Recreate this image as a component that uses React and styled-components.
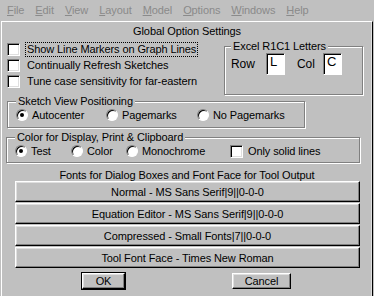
import React from "react";
import styled, { createGlobalStyle } from "styled-components";

const Global = createGlobalStyle`
  html, body {
    margin: 0;
    padding: 0;
    background: #c0c0c0;
  }
  body {
    width: 374px;
    height: 296px;
    overflow: hidden;
    font-family: "Liberation Sans", Arial, sans-serif;
    font-size: 11px;
    letter-spacing: -0.1px;
    color: #000;
  }
`;

const Screen = styled.div`
  width: 374px;
  height: 296px;
  background: #c0c0c0;
  display: flex;
  flex-direction: column;
`;

const MenuBar = styled.div`
  height: 21px;
  display: flex;
  align-items: center;
  padding-left: 1.5px;
`;

const MenuItem = styled.span`
  padding: 0 5.5px;
  color: #8a8a8a;
  line-height: 21px;
  u {
    text-decoration: underline;
    text-underline-offset: 1px;
  }
`;

const Dialog = styled.div`
  flex: 1;
  margin-left: 1px;
  width: 370px;
  border-top: 1px solid #fff;
  border-left: 1px solid #fff;
  border-right: 1px solid #000;
  box-shadow: inset -1px 0 0 #dfdfdf;
  display: flex;
  flex-direction: column;
`;

const Title = styled.div`
  height: 18px;
  line-height: 18px;
  text-align: center;
`;

const TopRow = styled.div`
  display: flex;
  height: 55px;
`;

const CheckList = styled.div`
  display: flex;
  flex-direction: column;
  padding: 1px 0 0 5px;
  width: 217px;
  flex: none;
`;

const Row = styled.label`
  height: 16px;
  display: flex;
  align-items: center;
  gap: 6px;
`;

const Box = styled.span`
  box-sizing: border-box;
  width: 13px;
  height: 13px;
  flex: none;
  background: #fff;
  border-top: 1px solid #808080;
  border-left: 1px solid #808080;
  border-right: 1px solid #fff;
  border-bottom: 1px solid #fff;
  box-shadow: inset 1px 1px 0 #000, inset -1px -1px 0 #dfdfdf;
`;

const Label = styled.span`
  white-space: nowrap;
  padding: 0 1px;
  outline: ${p => (p.$focus ? "1px dotted #000" : "none")};
  line-height: 13px;
`;

const Radio = styled.span`
  box-sizing: border-box;
  width: 12px;
  height: 12px;
  flex: none;
  border-radius: 50%;
  background: #fff;
  border: 1px solid;
  border-color: #808080 #fff #fff #808080;
  box-shadow: inset 1px 1px 0 #000;
  display: flex;
  align-items: center;
  justify-content: center;
  &::after {
    content: "";
    width: 4px;
    height: 4px;
    border-radius: 50%;
    background: ${p => (p.$on ? "#000" : "transparent")};
  }
`;

const Group = styled.fieldset`
  margin: ${p => p.$margin || "0"};
  width: ${p => p.$width}px;
  flex: none;
  box-sizing: border-box;
  padding: 0 0 ${p => p.$pb || 4}px ${p => p.$pl || 8}px;
  border: 1px solid #808080;
  box-shadow: 1px 1px 0 #fff, inset 1px 1px 0 #fff;
  min-width: 0;
`;

const Legend = styled.legend`
  padding: 0 2px;
  margin-left: 0;
  line-height: 13px;
  background: #c0c0c0;
`;

const RadioRow = styled.div`
  display: flex;
  align-items: center;
  height: 14px;
`;

const Option = styled.label`
  display: flex;
  align-items: center;
  gap: 4px;
  width: ${p => (p.$w ? `${p.$w}px` : "auto")};
  white-space: nowrap;
`;

const ExcelRow = styled.div`
  display: flex;
  align-items: center;
  height: 22px;
`;

const ExcelLabel = styled.span`
  width: ${p => p.$w}px;
  margin-left: ${p => p.$ml || 0}px;
  font-size: 12px;
`;

const LetterBox = styled.span`
  box-sizing: border-box;
  width: 19px;
  height: 22px;
  background: #fff;
  border: 1px solid;
  border-color: #808080 #fff #fff #808080;
  box-shadow: inset 1px 1px 0 #000;
  font-size: 13px;
  line-height: 14px;
  padding: 1px 0 0 3px;
`;

const FontsLabel = styled.div`
  text-align: center;
  line-height: 12px;
  height: 12px;
  margin-top: 6px;
`;

const FontButtons = styled.div`
  display: flex;
  flex-direction: column;
  gap: 1px;
  padding-left: 13px;
`;

const Button = styled.div`
  box-sizing: border-box;
  width: ${p => p.$w}px;
  height: ${p => p.$h || 21}px;
  background: #c0c0c0;
  border-top: 1px solid #fff;
  border-left: 1px solid #fff;
  border-right: 1px solid #000;
  border-bottom: 1px solid #000;
  box-shadow: inset -1px -1px 0 #808080, inset 1px 1px 0 #dfdfdf;
  display: flex;
  align-items: center;
  justify-content: center;
  white-space: nowrap;
  ${p => p.$default && `
    outline: 1px solid #000;
  `}
`;

const Footer = styled.div`
  display: flex;
  margin-top: 5px;
  padding-left: 80px;
  gap: 107px;
`;

const menus = ["File", "Edit", "View", "Layout", "Model", "Options", "Windows", "Help"];

export default function App() {
  return (
    <Screen>
      <Global />
      <MenuBar>
        {menus.map(m => (
          <MenuItem key={m}>
            <u>{m[0]}</u>
            {m.slice(1)}
          </MenuItem>
        ))}
      </MenuBar>
      <Dialog>
        <Title>Global Option Settings</Title>
        <TopRow>
          <CheckList>
            <Row>
              <Box />
              <Label $focus>Show Line Markers on Graph Lines</Label>
            </Row>
            <Row>
              <Box />
              <Label>Continually Refresh Sketches</Label>
            </Row>
            <Row>
              <Box />
              <Label>Tune case sensitivity for far-eastern</Label>
            </Row>
          </CheckList>
          <Group $width={139} $pb={4} $pl={6}>
            <Legend>Excel R1C1 Letters</Legend>
            <ExcelRow>
              <ExcelLabel $w={35}>Row</ExcelLabel>
              <LetterBox>L</LetterBox>
              <ExcelLabel $w={26} $ml={12}>Col</ExcelLabel>
              <LetterBox>C</LetterBox>
            </ExcelRow>
          </Group>
        </TopRow>
        <Group $width={298} $margin="0 0 0 5px" $pb={5}>
          <Legend>Sketch View Positioning</Legend>
          <RadioRow>
            <Option $w={90}>
              <Radio $on />
              Autocenter
            </Option>
            <Option $w={91}>
              <Radio />
              Pagemarks
            </Option>
            <Option>
              <Radio />
              No Pagemarks
            </Option>
          </RadioRow>
        </Group>
        <Group $width={354} $margin="3px 0 0 4px" $pb={4}>
          <Legend>Color for Display, Print &amp; Clipboard</Legend>
          <RadioRow>
            <Option $w={56}>
              <Radio $on />
              Test
            </Option>
            <Option $w={55}>
              <Radio />
              Color
            </Option>
            <Option $w={104}>
              <Radio />
              Monochrome
            </Option>
            <Option>
              <Box />
              <Label>Only solid lines</Label>
            </Option>
          </RadioRow>
        </Group>
        <FontsLabel>Fonts for Dialog Boxes and Font Face for Tool Output</FontsLabel>
        <FontButtons>
          <Button $w={345}>Normal - MS Sans Serif|9||0-0-0</Button>
          <Button $w={345}>Equation Editor - MS Sans Serif|9||0-0-0</Button>
          <Button $w={345}>Compressed - Small Fonts|7||0-0-0</Button>
          <Button $w={345}>Tool Font Face - Times New Roman</Button>
        </FontButtons>
        <Footer>
          <Button $w={43} $h={16} $default>OK</Button>
          <Button $w={59} $h={16}>Cancel</Button>
        </Footer>
      </Dialog>
    </Screen>
  );
}
